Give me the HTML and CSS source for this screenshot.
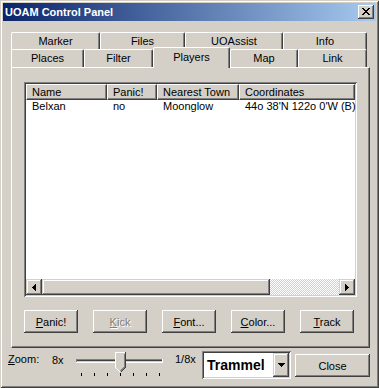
FILE: index.html
```html
<!DOCTYPE html>
<html lang="en">
<head>
    <meta charset="UTF-8">
    <meta name="viewport" content="width=device-width, initial-scale=1.0">
    <title>UOAM Control Panel</title>
    <link rel="stylesheet" href="styles.css">
</head>
<body>
    <div class="window">
        <div class="caption">
            <span class="caption-title">UOAM Control Panel</span>
            <span class="caption-close">
                <svg width="8" height="7" viewBox="0 0 8 7" shape-rendering="crispEdges">
                    <path d="M0 0h2v1H0zM6 0h2v1H6zM1 1h2v1H1zM5 1h2v1H5zM2 2h4v1H2zM3 3h2v1H3zM2 4h4v1H2zM1 5h2v1H1zM5 5h2v1H5zM0 6h2v1H0zM6 6h2v1H6z" fill="#000"/>
                </svg>
            </span>
        </div>

        <div class="client">
            <div class="tab-row tab-row-back">
                <div class="tab tab-marker">Marker</div>
                <div class="tab tab-files">Files</div>
                <div class="tab tab-uoassist">UOAssist</div>
                <div class="tab tab-info">Info</div>
            </div>
            <div class="tab-row tab-row-front">
                <div class="tab tab-places">Places</div>
                <div class="tab tab-filter">Filter</div>
                <div class="tab tab-players selected">Players</div>
                <div class="tab tab-map">Map</div>
                <div class="tab tab-link">Link</div>
            </div>

            <div class="tab-panel">
                <div class="listview">
                    <div class="lv-header">
                        <div class="lv-head col-name">Name</div>
                        <div class="lv-head col-panic">Panic!</div>
                        <div class="lv-head col-town">Nearest Town</div>
                        <div class="lv-head col-coords">Coordinates</div>
                    </div>
                    <div class="lv-body">
                        <div class="lv-row">
                            <div class="lv-cell col-name">Belxan</div>
                            <div class="lv-cell col-panic">no</div>
                            <div class="lv-cell col-town">Moonglow</div>
                            <div class="lv-cell col-coords">44o 38'N 122o 0'W (B)</div>
                        </div>
                    </div>
                    <div class="hscroll">
                        <div class="sb-btn">
                            <svg width="4" height="7" viewBox="0 0 4 7" shape-rendering="crispEdges">
                                <path d="M3 0h1v7H3zM2 1h1v5H2zM1 2h1v3H1zM0 3h1v1H0z" fill="#000"/>
                            </svg>
                        </div>
                        <div class="sb-thumb"></div>
                        <div class="sb-track"></div>
                        <div class="sb-btn">
                            <svg width="4" height="7" viewBox="0 0 4 7" shape-rendering="crispEdges">
                                <path d="M0 0h1v7H0zM1 1h1v5H1zM2 2h1v3H2zM3 3h1v1H3z" fill="#000"/>
                            </svg>
                        </div>
                    </div>
                </div>

                <div class="button-row">
                    <button class="btn"><u>P</u>anic!</button>
                    <button class="btn disabled"><u>K</u>ick</button>
                    <button class="btn"><u>F</u>ont...</button>
                    <button class="btn"><u>C</u>olor...</button>
                    <button class="btn"><u>T</u>rack</button>
                </div>
            </div>

            <div class="footer">
                <span class="zoom-label"><u>Z</u>oom:</span>
                <span class="zoom-min">8x</span>
                <svg class="slider" width="98" height="28" viewBox="0 0 98 28" shape-rendering="crispEdges">
                    <rect x="4" y="9" width="87" height="4" fill="#fff"/>
                    <rect x="4" y="9" width="86" height="3" fill="#808080"/>
                    <rect x="5" y="10" width="85" height="2" fill="#404040"/>
                    <rect x="5" y="11" width="85" height="1" fill="#d4d0c8"/>
                    <path d="M9 23h1v3H9zM22 23h1v3h-1zM35 23h1v3h-1zM48 23h1v3h-1zM61 23h1v3h-1zM74 23h1v3h-1zM87 23h1v3h-1z" fill="#000"/>
                    <path d="M43 2h11v16l-5.5 5.5L43 18z" fill="#d4d0c8"/>
                    <path d="M43.5 17.5V2.5H53" stroke="#fff" fill="none"/>
                    <path d="M43.5 17.5l5 5" stroke="#fff" fill="none"/>
                    <path d="M53.5 2v15.5l-5 5" stroke="#404040" fill="none"/>
                    <path d="M52.5 3.5v13.5l-4 4" stroke="#808080" fill="none"/>
                </svg>
                <span class="zoom-max">1/8x</span>
                <div class="combo">
                    <span class="combo-text">Trammel</span>
                    <span class="combo-btn">
                        <svg width="7" height="4" viewBox="0 0 7 4" shape-rendering="crispEdges">
                            <path d="M0 0h7v1H0zM1 1h5v1H1zM2 2h3v1H2zM3 3h1v1H3z" fill="#000"/>
                        </svg>
                    </span>
                </div>
                <button class="btn close-btn">Close</button>
            </div>
        </div>
    </div>
</body>
</html>
```

FILE: styles.css
```css
* {
    box-sizing: border-box;
}
body {
    margin: 0;
    background-color: #d4d0c8;
    font-family: "Liberation Sans", Arial, sans-serif;
    font-size: 11px;
    color: #000;
}
.window {
    width: 379px;
    height: 388px;
    padding: 3px;
    display: flex;
    flex-direction: column;
    background-color: #d4d0c8;
    box-shadow: inset 1px 1px #d4d0c8, inset -1px -1px #404040, inset 2px 2px #fff, inset -2px -2px #808080;
}

/* title bar */
.caption {
    height: 18px;
    display: flex;
    align-items: center;
    justify-content: space-between;
    padding: 0 2px;
    background: linear-gradient(to right, #0a246a, #a6caf0);
}
.caption-title {
    color: #fff;
    font-weight: bold;
    line-height: 13px;
}
.caption-close {
    width: 16px;
    height: 14px;
    padding: 3px 0 0 4px;
    background-color: #d4d0c8;
    box-shadow: inset -1px -1px #404040, inset 1px 1px #fff, inset -2px -2px #808080;
}
.caption-close svg {
    display: block;
}

.client {
    flex: 1;
    display: flex;
    flex-direction: column;
    padding: 11px 6px 0 8px;
}

/* tabs */
.tab-row {
    display: flex;
    height: 18px;
}
.tab-row-front {
    margin-top: -1px;
    align-items: flex-end;
}
.tab {
    height: 18px;
    border-top: 1px solid #fff;
    border-left: 1px solid #fff;
    border-right: 1px solid #404040;
    border-radius: 2px 2px 0 0;
    box-shadow: inset -1px 0 #808080;
    background-color: #d4d0c8;
    text-align: center;
    line-height: 16px;
}
.tab-marker { width: 89px; }
.tab-files { width: 85px; }
.tab-uoassist { width: 98px; }
.tab-info { width: 84px; }
.tab-places { width: 73px; }
.tab-filter { width: 69px; }
.tab-players { width: 77px; }
.tab-map { width: 68px; }
.tab-link { width: 69px; }
.tab.selected {
    height: 21px;
    margin-bottom: -1px;
    padding-top: 1px;
    position: relative;
    z-index: 1;
}

.tab-panel {
    border: 1px solid;
    border-color: #fff #404040 #404040 #fff;
    box-shadow: inset -1px -1px #808080;
    padding: 14px 12px;
}

/* list view */
.listview {
    width: 333px;
    height: 215px;
    padding: 2px;
    display: flex;
    flex-direction: column;
    background-color: #fff;
    box-shadow: inset 1px 1px #808080, inset -1px -1px #fff, inset 2px 2px #404040, inset -2px -2px #d4d0c8;
}
.lv-header {
    display: flex;
    height: 16px;
}
.lv-head {
    height: 16px;
    padding-left: 5px;
    line-height: 14px;
    background-color: #d4d0c8;
    border-top: 1px solid #fff;
    border-left: 1px solid #fff;
    border-right: 1px solid #404040;
    border-bottom: 1px solid #404040;
    box-shadow: inset -1px -1px #808080;
    white-space: nowrap;
}
.col-name { width: 81px; }
.col-panic { width: 50px; }
.col-town { width: 82px; }
.col-coords { width: 116px; }
.lv-body {
    flex: 1;
}
.lv-row {
    display: flex;
    height: 13px;
    line-height: 13px;
}
.lv-cell {
    padding-left: 6px;
    white-space: nowrap;
}

/* scrollbar */
.hscroll {
    display: flex;
    height: 16px;
}
.sb-btn,
.sb-thumb,
.combo-btn {
    background-color: #d4d0c8;
    box-shadow: inset -1px -1px #404040, inset 1px 1px #d4d0c8, inset -2px -2px #808080, inset 2px 2px #fff;
}
.sb-btn {
    width: 16px;
    height: 16px;
    display: flex;
    align-items: center;
    justify-content: center;
}
.sb-thumb {
    width: 228px;
}
.sb-track {
    flex: 1;
    background: repeating-conic-gradient(#fff 0 25%, #d4d0c8 0 50%) 0 0 / 2px 2px;
}

/* buttons */
.button-row {
    display: flex;
    gap: 15px;
    margin-top: 13px;
}
.btn {
    width: 54px;
    height: 23px;
    padding: 0;
    border: none;
    font-family: inherit;
    font-size: 11px;
    color: #000;
    background-color: #d4d0c8;
    box-shadow: inset -1px -1px #404040, inset 1px 1px #fff, inset -2px -2px #808080;
}
.btn.disabled {
    color: #808080;
    text-shadow: 1px 1px #fff;
}

/* bottom row */
.footer {
    display: flex;
    align-items: flex-start;
    margin-left: -3px;
}
.footer > * {
    flex-shrink: 0;
}
.zoom-label {
    width: 44px;
    margin-top: 5px;
    line-height: 13px;
}
.zoom-min {
    width: 20px;
    margin-top: 6px;
    line-height: 13px;
}
.slider {
    display: block;
    margin-top: 2px;
}
.zoom-max {
    width: 27px;
    margin: 5px 0 0 5px;
    line-height: 13px;
}
.combo {
    width: 89px;
    height: 28px;
    margin-top: 3px;
    padding: 2px;
    display: flex;
    background-color: #fff;
    box-shadow: inset 1px 1px #808080, inset -1px -1px #fff, inset 2px 2px #404040, inset -2px -2px #d4d0c8;
}
.combo-text {
    flex: 1;
    padding-left: 3px;
    font-size: 14px;
    font-weight: bold;
    line-height: 24px;
}
.combo-btn {
    width: 16px;
    height: 24px;
    display: flex;
    align-items: center;
    justify-content: center;
}
.close-btn {
    width: 75px;
    margin: 6px 0 0 4px;
}
```
